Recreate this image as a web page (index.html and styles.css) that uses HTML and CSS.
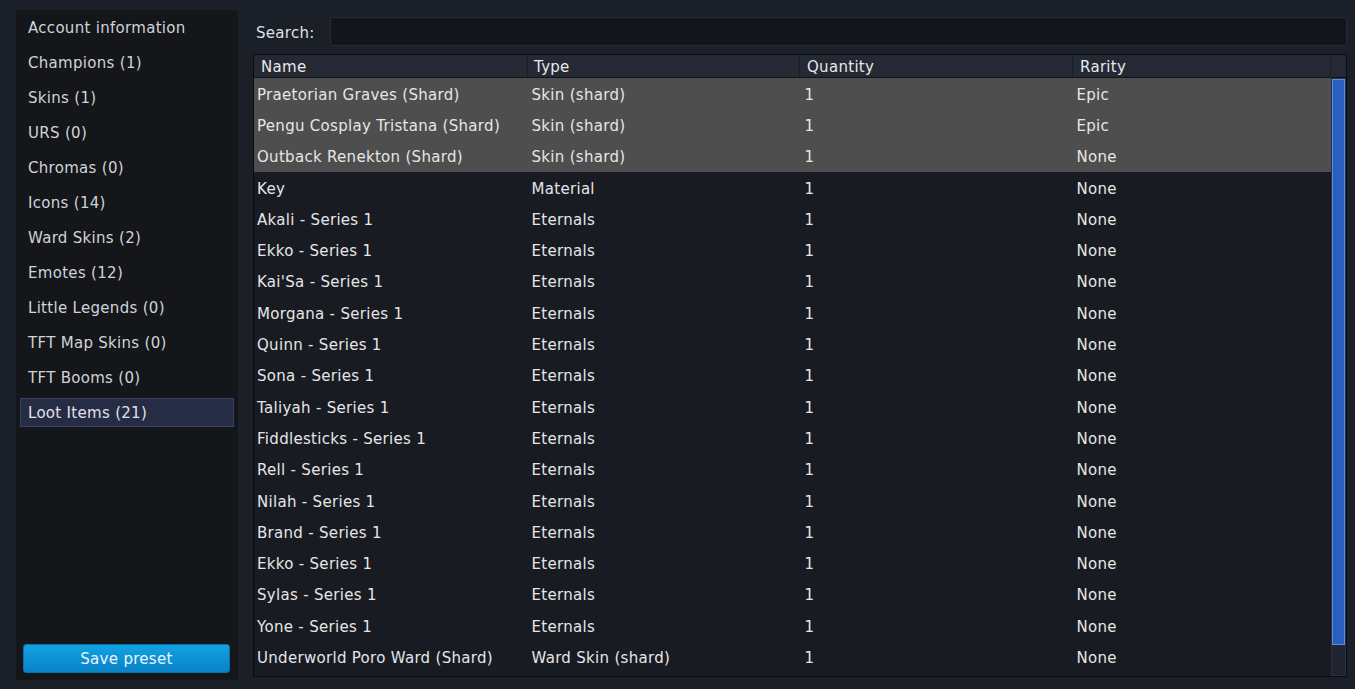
FILE: index.html
```html
<!DOCTYPE html>
<html lang="en">
<head>
    <meta charset="UTF-8">
    <title>Account inventory</title>
    <link rel="stylesheet" href="styles.css">
</head>
<body>
    <div class="window">
        <!-- Category list on the left -->
        <aside class="sidebar">
            <ul class="nav">
                <li>Account information</li>
                <li>Champions (1)</li>
                <li>Skins (1)</li>
                <li>URS (0)</li>
                <li>Chromas (0)</li>
                <li>Icons (14)</li>
                <li>Ward Skins (2)</li>
                <li>Emotes (12)</li>
                <li>Little Legends (0)</li>
                <li>TFT Map Skins (0)</li>
                <li>TFT Booms (0)</li>
                <li class="active"><span>Loot Items (21)</span></li>
            </ul>
            <button class="save-btn">Save preset</button>
        </aside>

        <main class="content">
            <div class="search-row">
                <label for="search">Search:</label>
                <input id="search" type="text">
            </div>

            <div class="table-wrap">
                <div class="table-scroll">
                    <table class="loot">
                        <thead>
                            <tr>
                                <th>Name</th>
                                <th>Type</th>
                                <th>Quantity</th>
                                <th>Rarity</th>
                            </tr>
                        </thead>
                        <tbody>
                            <tr class="selected"><td>Praetorian Graves (Shard)</td><td>Skin (shard)</td><td>1</td><td>Epic</td></tr>
                            <tr class="selected"><td>Pengu Cosplay Tristana (Shard)</td><td>Skin (shard)</td><td>1</td><td>Epic</td></tr>
                            <tr class="selected"><td>Outback Renekton (Shard)</td><td>Skin (shard)</td><td>1</td><td>None</td></tr>
                            <tr><td>Key</td><td>Material</td><td>1</td><td>None</td></tr>
                            <tr><td>Akali - Series 1</td><td>Eternals</td><td>1</td><td>None</td></tr>
                            <tr><td>Ekko - Series 1</td><td>Eternals</td><td>1</td><td>None</td></tr>
                            <tr><td>Kai'Sa - Series 1</td><td>Eternals</td><td>1</td><td>None</td></tr>
                            <tr><td>Morgana - Series 1</td><td>Eternals</td><td>1</td><td>None</td></tr>
                            <tr><td>Quinn - Series 1</td><td>Eternals</td><td>1</td><td>None</td></tr>
                            <tr><td>Sona - Series 1</td><td>Eternals</td><td>1</td><td>None</td></tr>
                            <tr><td>Taliyah - Series 1</td><td>Eternals</td><td>1</td><td>None</td></tr>
                            <tr><td>Fiddlesticks - Series 1</td><td>Eternals</td><td>1</td><td>None</td></tr>
                            <tr><td>Rell - Series 1</td><td>Eternals</td><td>1</td><td>None</td></tr>
                            <tr><td>Nilah - Series 1</td><td>Eternals</td><td>1</td><td>None</td></tr>
                            <tr><td>Brand - Series 1</td><td>Eternals</td><td>1</td><td>None</td></tr>
                            <tr><td>Ekko - Series 1</td><td>Eternals</td><td>1</td><td>None</td></tr>
                            <tr><td>Sylas - Series 1</td><td>Eternals</td><td>1</td><td>None</td></tr>
                            <tr><td>Yone - Series 1</td><td>Eternals</td><td>1</td><td>None</td></tr>
                            <tr><td>Underworld Poro Ward (Shard)</td><td>Ward Skin (shard)</td><td>1</td><td>None</td></tr>
                        </tbody>
                    </table>
                </div>
                <div class="scroll-col">
                    <div class="header-cap"></div>
                    <div class="scrollbar">
                        <div class="thumb"></div>
                    </div>
                </div>
            </div>
        </main>
    </div>
</body>
</html>
```

FILE: styles.css
```css
body {
    margin: 0;
    background: #1b1f27;
    color: #e2e2e2;
    font-family: 'DejaVu Sans', 'Verdana', sans-serif;
    font-size: 15px;
    letter-spacing: 0.3px;
}

.window {
    display: flex;
    height: 689px;
    padding: 10px 8px 9px 16px;
    box-sizing: border-box;
}

/* Left category panel */
.sidebar {
    width: 222px;
    flex: none;
    background: #141619;
    display: flex;
    flex-direction: column;
}

.nav {
    list-style: none;
    margin: 0;
    padding: 1px 0 0;
    flex: 1;
}

.nav li {
    height: 35px;
    line-height: 35px;
    padding-left: 12px;
    color: #cfd3da;
    white-space: nowrap;
}

.nav li.active {
    padding: 2px 4px 4px;
    box-sizing: border-box;
    line-height: normal;
}

.nav li.active span {
    display: flex;
    align-items: center;
    height: 29px;
    padding-left: 7px;
    background: #272c45;
    border: 1px solid #3c4466;
    box-sizing: border-box;
    color: #e0e2ea;
}

.save-btn {
    margin: 0 8px 7px 7px;
    height: 29px;
    border: 1px solid #0a6fae;
    border-radius: 3px;
    background: linear-gradient(#12a2e2, #0882c6);
    color: #eaf6fd;
    font-family: inherit;
    font-size: 15px;
    letter-spacing: 0.3px;
    padding-top: 2px;
}

/* Right side: search + table */
.content {
    flex: 1;
    display: flex;
    flex-direction: column;
    padding-left: 15px;
    min-width: 0;
}

.search-row {
    display: flex;
    align-items: center;
    height: 29px;
    margin: 7px 0 8px 3px;
}

.search-row label {
    width: 74px;
    padding-top: 3px;
    color: #dfe1e5;
}

.search-row input {
    flex: 1;
    height: 29px;
    box-sizing: border-box;
    background: #12151a;
    border: 1px solid #262a33;
    border-radius: 2px;
    color: #e2e2e2;
    font: inherit;
}

.table-wrap {
    height: 623px;
    display: flex;
    background: #181b22;
    border: 1px solid #0b0c0f;
    box-sizing: border-box;
}

.table-scroll {
    flex: 1;
    overflow: hidden;
}

.loot {
    width: 100%;
    border-collapse: collapse;
    table-layout: fixed;
}

.loot th {
    height: 21px;
    padding: 1px 0 0 7px;
    text-align: left;
    font-weight: normal;
    background: #252933;
    border-right: 1px solid #1b1e25;
    border-bottom: 1px solid #111317;
    color: #e6e8ec;
}

.loot th:nth-child(1) { width: 266px; }
.loot th:nth-child(2) { width: 265px; }
.loot th:nth-child(3) { width: 265px; }

.loot td {
    height: 29.3px;
    padding: 2px 0 0 3px;
    white-space: nowrap;
    color: #e6e6e6;
}

.loot th:nth-child(2) { padding-left: 6px; }
.loot td:nth-child(2) { padding-left: 4px; }
.loot td:nth-child(3) { padding-left: 5px; }
.loot td:nth-child(4) { padding-left: 4px; }

.loot tr.selected td {
    background: #4e4e4e;
}

/* Vertical scrollbar, with the header strip continuing above it */
.scroll-col {
    width: 15px;
    flex: none;
    display: flex;
    flex-direction: column;
}

.header-cap {
    height: 23px;
    background: #252933;
    border-bottom: 1px solid #111317;
    box-sizing: border-box;
}

.scrollbar {
    flex: 1;
    background: #1f2430;
    border: 1px solid #2a3142;
    box-sizing: border-box;
}

.thumb {
    height: 566px;
    background: #2a5fbf;
    border: 1px solid #5a8be0;
    box-sizing: border-box;
}
```
